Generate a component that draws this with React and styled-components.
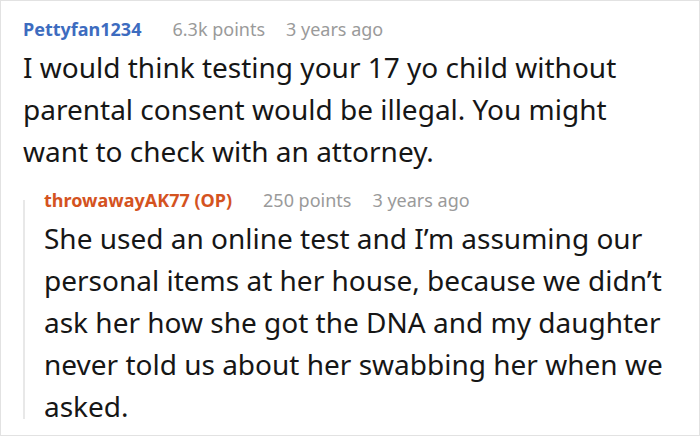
import React from "react";
import styled, { createGlobalStyle } from "styled-components";

const Global = createGlobalStyle`
  html, body { margin: 0; padding: 0; background: #fff; }
  body { font-family: "Noto Sans", "Open Sans", sans-serif; }
`;

const Frame = styled.div`
  box-sizing: border-box;
  width: 700px;
  height: 436px;
  border: 1px solid #e2e2e2;
  padding: 16px 34px 0 22px;
  overflow: hidden;
  background: #fff;
`;

const Meta = styled.div`
  display: flex;
  align-items: baseline;
  gap: 31px;
  font-size: 18px;
  line-height: 24px;
  margin-bottom: 5px;
`;

const Author = styled.span`
  font-weight: 700;
  color: ${(p) => p.$color};
`;

const Info = styled.span`
  color: #9a9a9a;
  display: flex;
  gap: 21px;
`;

const Body = styled.p`
  margin: 0;
  font-size: 28px;
  line-height: 42px;
  color: #161616;
`;

const Reply = styled.div`
  position: relative;
  margin-top: 16px;
  padding-left: 21px;

  &::before {
    content: "";
    position: absolute;
    left: 0;
    top: 12px;
    bottom: 8px;
    width: 2px;
    background: #e8e8e8;
  }
`;

function Comment({ author, color, points, time, text }) {
  return (
    <div>
      <Meta>
        <Author $color={color}>{author}</Author>
        <Info>
          <span>{points}</span>
          <span>{time}</span>
        </Info>
      </Meta>
      <Body>{text}</Body>
    </div>
  );
}

export default function App() {
  return (
    <>
      <Global />
      <Frame>
        <Comment
          author="Pettyfan1234"
          color="#3d6cbf"
          points="6.3k points"
          time="3 years ago"
          text="I would think testing your 17 yo child without parental consent would be illegal. You might want to check with an attorney."
        />
        <Reply>
          <Comment
            author="throwawayAK77 (OP)"
            color="#d4531f"
            points="250 points"
            time="3 years ago"
            text="She used an online test and I’m assuming our personal items at her house, because we didn’t ask her how she got the DNA and my daughter never told us about her swabbing her when we asked."
          />
        </Reply>
      </Frame>
    </>
  );
}
